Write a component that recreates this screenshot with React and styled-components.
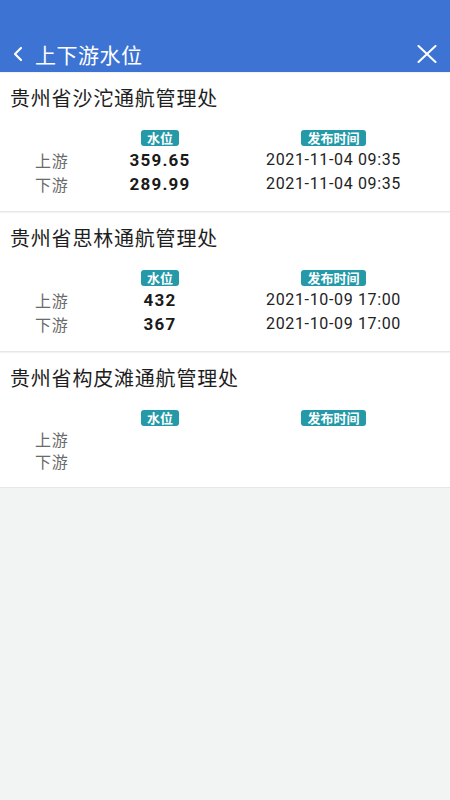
import React from "react";
import styled, { createGlobalStyle } from "styled-components";

const Global = createGlobalStyle`
  html, body { margin: 0; padding: 0; background: #f2f4f4; }
  body { font-family: Roboto, "Noto Sans CJK SC", sans-serif; }
  * { box-sizing: border-box; }
`;

const Page = styled.div`
  width: 450px;
  min-height: 800px;
  background: #f2f4f4;
`;

const Header = styled.header`
  height: 72px;
  background: #3d74d3;
  display: flex;
  align-items: flex-end;
  padding: 0 12px 3px 12px;
`;

const HeaderInner = styled.div`
  display: flex;
  align-items: center;
  width: 100%;
  height: 30px;
`;

const BackBtn = styled.button`
  border: 0;
  background: none;
  padding: 0;
  width: 14px;
  height: 20px;
  display: flex;
  align-items: center;
  margin-right: 9px;
`;

const Title = styled.h1`
  margin: 0;
  flex: 1;
  color: #fff;
  font-size: 21px;
  font-weight: 400;
  line-height: 30px;
  letter-spacing: 0.5px;
  font-family: "Noto Sans CJK SC", sans-serif;
`;

const CloseBtn = styled.button`
  border: 0;
  background: none;
  padding: 0;
  width: 20px;
  height: 20px;
  margin-right: 1px;
  display: flex;
  align-items: center;
  justify-content: center;
`;

const List = styled.div`
  display: flex;
  flex-direction: column;
  gap: 1px;
  padding-top: 1px;
`;

const Card = styled.section`
  background: #fff;
  padding: 12px 0 15px 0;
  border-bottom: 1px solid #e6e7e8;
`;

const CardTitle = styled.h2`
  margin: 0 0 19px 10px;
  font-size: 20px;
  line-height: 26px;
  font-weight: 400;
  color: #1e1e1e;
  font-family: "Noto Sans CJK SC", sans-serif;
  letter-spacing: 0.8px;
`;

const Table = styled.div`
  display: grid;
  grid-template-columns: 51px 148px 199px;
  margin-left: 35px;
  align-items: center;
`;

const BadgeCell = styled.div`
  display: flex;
  justify-content: center;
  margin-bottom: 2px;
`;

const Badge = styled.span`
  display: inline-block;
  background: #2499a8;
  color: #fff;
  font-size: 13px;
  font-weight: 700;
  line-height: 16px;
  height: 16px;
  padding: 0 6px;
  border-radius: 3px;
  font-family: "Noto Sans CJK SC", sans-serif;
`;

const Label = styled.div`
  font-size: 16px;
  line-height: 22px;
  color: #6a6a6a;
  letter-spacing: 0.8px;
  font-family: "Noto Sans CJK SC", sans-serif;
  white-space: nowrap;
`;

const Value = styled.div`
  text-align: center;
  font-size: 17px;
  line-height: 24px;
  font-weight: 700;
  color: #1a1a1a;
  letter-spacing: 1.2px;
  font-family: Roboto, sans-serif;
`;

const DateCell = styled.div`
  text-align: center;
  font-size: 16px;
  line-height: 24px;
  color: #222;
  letter-spacing: 0.65px;
  font-family: Roboto, sans-serif;
  white-space: nowrap;
`;

const Empty = styled.div``;

const data = [
  {
    name: "贵州省沙沱通航管理处",
    rows: [
      { label: "上游", value: "359.65", time: "2021-11-04 09:35" },
      { label: "下游", value: "289.99", time: "2021-11-04 09:35" },
    ],
  },
  {
    name: "贵州省思林通航管理处",
    rows: [
      { label: "上游", value: "432", time: "2021-10-09 17:00" },
      { label: "下游", value: "367", time: "2021-10-09 17:00" },
    ],
  },
  {
    name: "贵州省构皮滩通航管理处",
    rows: [
      { label: "上游", value: "", time: "" },
      { label: "下游", value: "", time: "" },
    ],
  },
];

export default function App() {
  return (
    <Page>
      <Global />
      <Header>
        <HeaderInner>
          <BackBtn aria-label="back">
            <svg width="12" height="16" viewBox="0 0 12 16">
              <polyline
                points="9,2 3,8 9,14"
                fill="none"
                stroke="#fff"
                strokeWidth="2.2"
                strokeLinecap="round"
                strokeLinejoin="round"
              />
            </svg>
          </BackBtn>
          <Title>上下游水位</Title>
          <CloseBtn aria-label="close">
            <svg width="20" height="18" viewBox="0 0 20 18">
              <path
                d="M1.5 1 L18.5 17 M18.5 1 L1.5 17"
                stroke="#fff"
                strokeWidth="2"
                strokeLinecap="round"
              />
            </svg>
          </CloseBtn>
        </HeaderInner>
      </Header>
      <List>
        {data.map((s) => (
          <Card key={s.name}>
            <CardTitle>{s.name}</CardTitle>
            <Table>
              <Empty />
              <BadgeCell>
                <Badge>水位</Badge>
              </BadgeCell>
              <BadgeCell>
                <Badge>发布时间</Badge>
              </BadgeCell>
              {s.rows.map((r) => (
                <React.Fragment key={r.label}>
                  <Label>{r.label}</Label>
                  <Value>{r.value}</Value>
                  <DateCell>{r.time}</DateCell>
                </React.Fragment>
              ))}
            </Table>
          </Card>
        ))}
      </List>
    </Page>
  );
}
